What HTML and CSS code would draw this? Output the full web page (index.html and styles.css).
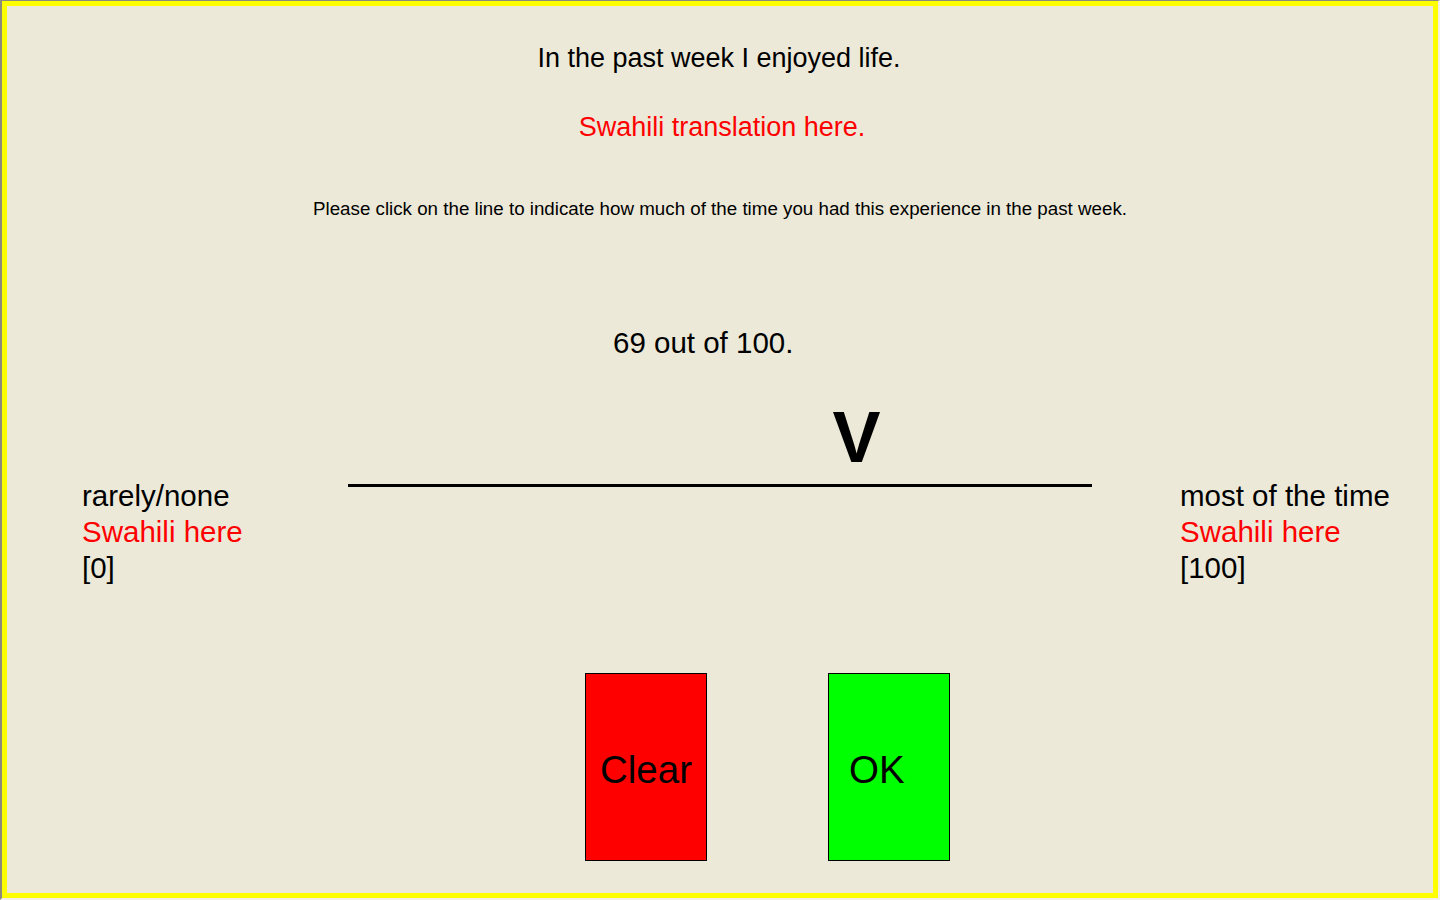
FILE: index.html
```html
<!DOCTYPE html>
<html lang="en">
<head>
<meta charset="utf-8">
<title>Rating</title>
<link rel="stylesheet" href="styles.css">
</head>
<body>
<div class="window">
  <main class="panel">
    <h1 class="question">In the past week I enjoyed life.</h1>
    <p class="translation">Swahili translation here.</p>
    <p class="instruction">Please click on the line to indicate how much of the time you had this experience in the past week.</p>
    <p class="score">69 out of 100.</p>

    <section class="scale">
      <div class="anchor">
        <div>rarely/none</div>
        <div class="red">Swahili here</div>
        <div>[0]</div>
      </div>
      <div class="track-cell">
        <div class="track">
          <span class="marker">V</span>
        </div>
      </div>
      <div class="anchor anchor-right">
        <div>most of the time</div>
        <div class="red">Swahili here</div>
        <div>[100]</div>
      </div>
    </section>

    <div class="buttons">
      <button class="btn btn-clear" type="button">Clear</button>
      <button class="btn btn-ok" type="button">OK</button>
    </div>
  </main>
</div>
</body>
</html>
```

FILE: styles.css
```css
html, body {
  margin: 0;
  padding: 0;
  background: #ece9d8;
}

body {
  font-family: "Liberation Sans", Arial, sans-serif;
  color: #000;
}

.window {
  box-sizing: border-box;
  width: 1440px;
  height: 900px;
  border-style: solid;
  border-width: 1px 2px 2px 2px;
  border-color: #8c8a7c #f2f0e6 #f2f0e6 #8c8a7c;
}

.panel {
  box-sizing: border-box;
  height: 100%;
  border: 5px solid #ffff00;
  padding-top: 36px;
  display: flex;
  flex-direction: column;
}

.question,
.translation,
.instruction,
.score {
  margin: 0;
  font-weight: normal;
}

.question {
  font-size: 27px;
  line-height: 32px;
  text-align: center;
  margin-left: -2px;
}

.translation {
  font-size: 27px;
  line-height: 32px;
  text-align: center;
  color: #f00;
  margin-top: 37px;
  margin-left: 4px;
}

.instruction {
  font-size: 18.75px;
  line-height: 24px;
  text-align: center;
  margin-top: 54px;
}

.score {
  font-size: 29.5px;
  line-height: 36px;
  margin-top: 104px;
  padding-left: 606px;
}

.scale {
  margin-top: 117px;
  padding-left: 75px;
  display: grid;
  grid-template-columns: 266px 744px 1fr;
  align-items: start;
}

.anchor {
  font-size: 29.5px;
  line-height: 36px;
}

.anchor-right {
  padding-left: 88px;
}

.red {
  color: #f00;
}

.track-cell {
  padding-top: 6px;
}

.track {
  position: relative;
  height: 3px;
  background: #000;
}

.marker {
  position: absolute;
  left: 68.35%;
  bottom: 14px;
  transform: translateX(-50%);
  font-size: 72px;
  line-height: 72px;
  font-weight: bold;
}

.buttons {
  margin-top: 87px;
  padding-left: 578px;
  display: flex;
  gap: 121px;
}

.btn {
  box-sizing: border-box;
  width: 122px;
  height: 188px;
  border: 1px solid #000;
  margin: 0;
  padding: 5px 0 0 0;
  font-family: "Liberation Sans", Arial, sans-serif;
  font-size: 38.5px;
  color: #000;
  display: flex;
  align-items: center;
  cursor: pointer;
}

.btn-clear {
  background: #ff0000;
  justify-content: center;
}

.btn-ok {
  background: #00ff00;
  justify-content: flex-start;
  padding-left: 20px;
}
```
